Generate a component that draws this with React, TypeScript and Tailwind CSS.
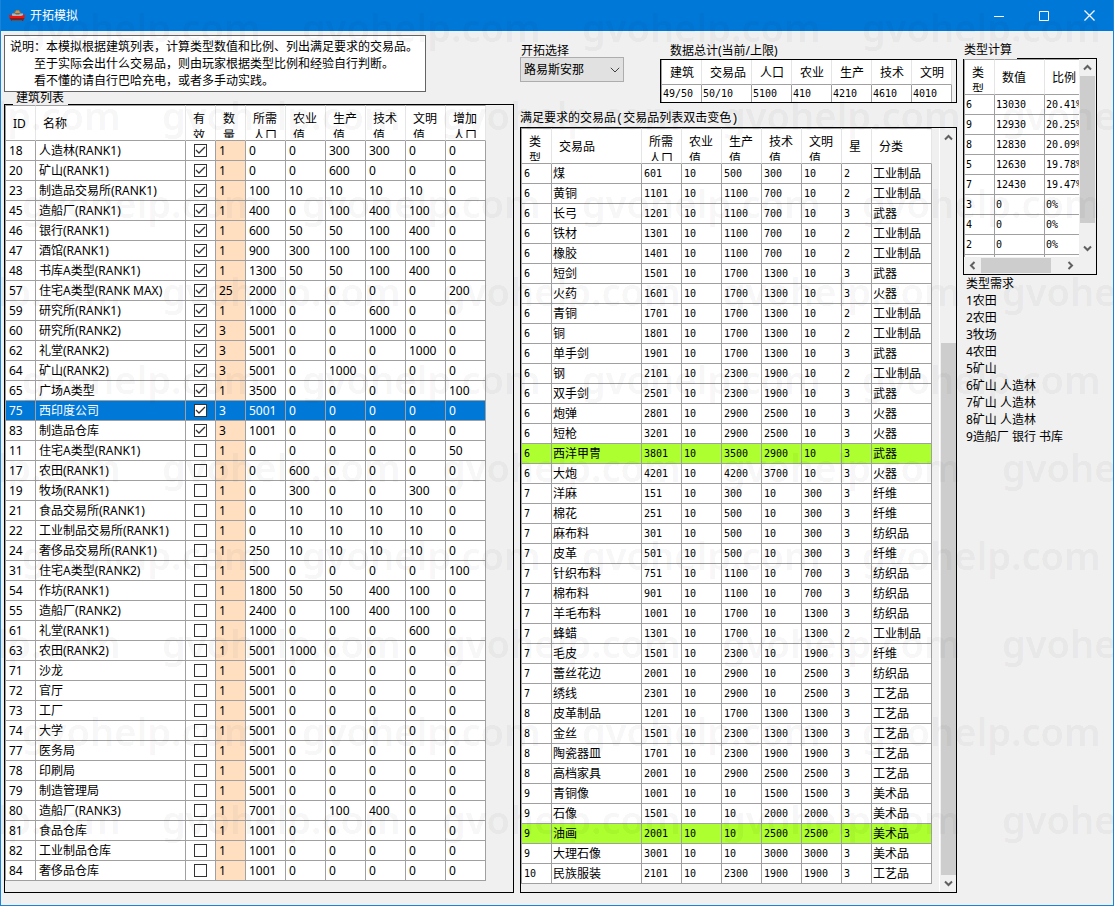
import { ReactNode } from "react";

type Building = [id: number, name: string, on: 0 | 1, count: number, pop: number, agri: number, prod: number, tech: number, civ: number, add: number];
type Goods = [type: number, name: string, pop: number, agri: number, prod: number, tech: number, civ: number, star: number, category: string];

const SELECTED_ID = 75;

const buildings: Building[] = [
  [18, "人造林(RANK1)", 1, 1, 0, 0, 300, 300, 0, 0],
  [20, "矿山(RANK1)", 1, 1, 0, 0, 600, 0, 0, 0],
  [23, "制造品交易所(RANK1)", 1, 1, 100, 10, 10, 10, 10, 0],
  [45, "造船厂(RANK1)", 1, 1, 400, 0, 100, 400, 100, 0],
  [46, "银行(RANK1)", 1, 1, 600, 50, 50, 100, 400, 0],
  [47, "酒馆(RANK1)", 1, 1, 900, 300, 100, 100, 100, 0],
  [48, "书库A类型(RANK1)", 1, 1, 1300, 50, 50, 100, 400, 0],
  [57, "住宅A类型(RANK MAX)", 1, 25, 2000, 0, 0, 0, 0, 200],
  [59, "研究所(RANK1)", 1, 1, 1000, 0, 0, 600, 0, 0],
  [60, "研究所(RANK2)", 1, 3, 5001, 0, 0, 1000, 0, 0],
  [62, "礼堂(RANK2)", 1, 3, 5001, 0, 0, 0, 1000, 0],
  [64, "矿山(RANK2)", 1, 3, 5001, 0, 1000, 0, 0, 0],
  [65, "广场A类型", 1, 1, 3500, 0, 0, 0, 0, 100],
  [75, "西印度公司", 1, 3, 5001, 0, 0, 0, 0, 0],
  [83, "制造品仓库", 1, 3, 1001, 0, 0, 0, 0, 0],
  [11, "住宅A类型(RANK1)", 0, 1, 0, 0, 0, 0, 0, 50],
  [17, "农田(RANK1)", 0, 1, 0, 600, 0, 0, 0, 0],
  [19, "牧场(RANK1)", 0, 1, 0, 300, 0, 0, 300, 0],
  [21, "食品交易所(RANK1)", 0, 1, 0, 10, 10, 10, 10, 0],
  [22, "工业制品交易所(RANK1)", 0, 1, 0, 10, 10, 10, 10, 0],
  [24, "奢侈品交易所(RANK1)", 0, 1, 250, 10, 10, 10, 10, 0],
  [31, "住宅A类型(RANK2)", 0, 1, 500, 0, 0, 0, 0, 100],
  [54, "作坊(RANK1)", 0, 1, 1800, 50, 50, 400, 100, 0],
  [55, "造船厂(RANK2)", 0, 1, 2400, 0, 100, 400, 100, 0],
  [61, "礼堂(RANK1)", 0, 1, 1000, 0, 0, 0, 600, 0],
  [63, "农田(RANK2)", 0, 1, 5001, 1000, 0, 0, 0, 0],
  [71, "沙龙", 0, 1, 5001, 0, 0, 0, 0, 0],
  [72, "官厅", 0, 1, 5001, 0, 0, 0, 0, 0],
  [73, "工厂", 0, 1, 5001, 0, 0, 0, 0, 0],
  [74, "大学", 0, 1, 5001, 0, 0, 0, 0, 0],
  [77, "医务局", 0, 1, 5001, 0, 0, 0, 0, 0],
  [78, "印刷局", 0, 1, 5001, 0, 0, 0, 0, 0],
  [79, "制造管理局", 0, 1, 5001, 0, 0, 0, 0, 0],
  [80, "造船厂(RANK3)", 0, 1, 7001, 0, 100, 400, 0, 0],
  [81, "食品仓库", 0, 1, 1001, 0, 0, 0, 0, 0],
  [82, "工业制品仓库", 0, 1, 1001, 0, 0, 0, 0, 0],
  [84, "奢侈品仓库", 0, 1, 1001, 0, 0, 0, 0, 0],
];

const goods: Goods[] = [
  [6, "煤", 601, 10, 500, 300, 10, 2, "工业制品"],
  [6, "黄铜", 1101, 10, 1100, 700, 10, 2, "工业制品"],
  [6, "长弓", 1201, 10, 1100, 700, 10, 3, "武器"],
  [6, "铁材", 1301, 10, 1100, 700, 10, 2, "工业制品"],
  [6, "橡胶", 1401, 10, 1100, 700, 10, 2, "工业制品"],
  [6, "短剑", 1501, 10, 1700, 1300, 10, 3, "武器"],
  [6, "火药", 1601, 10, 1700, 1300, 10, 3, "火器"],
  [6, "青铜", 1701, 10, 1700, 1300, 10, 2, "工业制品"],
  [6, "铜", 1801, 10, 1700, 1300, 10, 2, "工业制品"],
  [6, "单手剑", 1901, 10, 1700, 1300, 10, 3, "武器"],
  [6, "钢", 2101, 10, 2300, 1900, 10, 2, "工业制品"],
  [6, "双手剑", 2501, 10, 2300, 1900, 10, 3, "武器"],
  [6, "炮弹", 2801, 10, 2900, 2500, 10, 3, "火器"],
  [6, "短枪", 3201, 10, 2900, 2500, 10, 3, "火器"],
  [6, "西洋甲冑", 3801, 10, 3500, 2900, 10, 3, "武器"],
  [6, "大炮", 4201, 10, 4200, 3700, 10, 3, "火器"],
  [7, "洋麻", 151, 10, 300, 10, 300, 3, "纤维"],
  [7, "棉花", 251, 10, 500, 10, 300, 3, "纤维"],
  [7, "麻布料", 301, 10, 500, 10, 300, 3, "纺织品"],
  [7, "皮革", 501, 10, 500, 10, 300, 3, "纤维"],
  [7, "针织布料", 751, 10, 1100, 10, 700, 3, "纺织品"],
  [7, "棉布料", 901, 10, 1100, 10, 700, 3, "纺织品"],
  [7, "羊毛布料", 1001, 10, 1700, 10, 1300, 3, "纺织品"],
  [7, "蜂蜡", 1301, 10, 1700, 10, 1300, 2, "工业制品"],
  [7, "毛皮", 1501, 10, 2300, 10, 1900, 3, "纤维"],
  [7, "蕾丝花边", 2001, 10, 2900, 10, 2500, 3, "纺织品"],
  [7, "绣线", 2301, 10, 2900, 10, 2500, 3, "工艺品"],
  [8, "皮革制品", 1201, 10, 1700, 1300, 1300, 3, "工艺品"],
  [8, "金丝", 1501, 10, 2300, 1300, 1300, 3, "工艺品"],
  [8, "陶瓷器皿", 1701, 10, 2300, 1900, 1900, 3, "工艺品"],
  [8, "高档家具", 2001, 10, 2900, 2500, 2500, 3, "工艺品"],
  [9, "青铜像", 1001, 10, 10, 1500, 1500, 3, "美术品"],
  [9, "石像", 1501, 10, 10, 2000, 2000, 3, "美术品"],
  [9, "油画", 2001, 10, 10, 2500, 2500, 3, "美术品"],
  [9, "大理石像", 3001, 10, 10, 3000, 3000, 3, "美术品"],
  [10, "民族服装", 2101, 10, 2300, 1900, 1900, 3, "工艺品"],
];

const marked = ["西洋甲冑", "油画"];

const totals = [
  ["建筑", "49/50"],
  ["交易品", "50/10"],
  ["人口", "5100"],
  ["农业", "410"],
  ["生产", "4210"],
  ["技术", "4610"],
  ["文明", "4010"],
];

const types = [
  ["6", "13030", "20.41%"],
  ["9", "12930", "20.25%"],
  ["8", "12830", "20.09%"],
  ["5", "12630", "19.78%"],
  ["7", "12430", "19.47%"],
  ["3", "0", "0%"],
  ["4", "0", "0%"],
  ["2", "0", "0%"],
  ["1", "0", "0%"],
];

const needs = ["1农田", "2农田", "3牧场", "4农田", "5矿山", "6矿山 人造林", "7矿山 人造林", "8矿山 人造林", "9造船厂 银行 书库"];

const MONO = "font-['DejaVu_Sans_Mono','Noto_Sans_CJK_SC',monospace] text-[10px]";
const CELL = "h-5 border-r border-b border-[#a0a0a0] p-0 whitespace-nowrap overflow-hidden first:border-l";

function Cols({ widths }: { widths: number[] }) {
  return (
    <colgroup>
      {widths.map((w, i) => (
        <col key={i} style={{ width: w }} />
      ))}
    </colgroup>
  );
}

// Header cell; long captions wrap and are cut off at the second line
function Head({ children, wrap = false }: { children: ReactNode; wrap?: boolean }) {
  return (
    <th
      scope="col"
      className="h-9 border-t border-r border-b border-t-[#a0a0a0] border-r-[#e5e5e5] border-b-[#a0a0a0] bg-white p-0 text-left align-top font-normal first:border-l first:border-l-[#a0a0a0]"
    >
      {wrap ? (
        <div className="h-8 overflow-hidden px-[7px] pt-1">{children}</div>
      ) : (
        <div className="overflow-hidden px-[7px] pt-[9px] whitespace-nowrap">{children}</div>
      )}
    </th>
  );
}

function Arrow({ className = "" }: { className?: string }) {
  return (
    <svg viewBox="0 0 9 9" className={`size-[9px] shrink-0 ${className}`} fill="none" stroke="#606060" strokeWidth="2">
      <path d="M1 6.5 4.5 3 8 6.5" />
    </svg>
  );
}

function CheckBox({ label, checked }: { label: string; checked: boolean }) {
  return (
    <label className="mx-auto grid size-[13px] place-items-center">
      <input
        type="checkbox"
        aria-label={label}
        defaultChecked={checked}
        className="peer col-start-1 row-start-1 size-[13px] appearance-none border border-[#333] bg-white"
      />
      <svg
        viewBox="0 0 13 13"
        className="pointer-events-none invisible col-start-1 row-start-1 size-[13px] peer-checked:visible"
        fill="none"
        stroke="#333"
        strokeWidth="1.3"
      >
        <path d="M2 6 5 9 11 3" />
      </svg>
    </label>
  );
}

function TitleBar() {
  return (
    <header className="flex h-[31px] items-center bg-[#0078d7] pl-2 text-white">
      <svg viewBox="0 0 16 16" className="size-4">
        <path d="M5 3.5 7 2h3l2 2 1 3H4z" fill="#6e6a60" />
        <path d="M7 2.5h3l1 2.5H6z" fill="#c99a55" />
        <path d="M3 5.5h3l1 1h3l1-1h3v2.5H3z" fill="#a9b8bf" />
        <path d="M0 6.5 4 8h8l4-1.5-.5 4h-15z" fill="#f0140c" />
        <path d="M.5 10h15l-1.5 3H2.5z" fill="#7d2326" />
        <path d="M3 12h10v1H3z" fill="#55585e" />
      </svg>
      <h1 className="ml-[5px] flex-1">开拓模拟</h1>
      <button type="button" aria-label="最小化" className="grid h-full w-[45px] place-items-center">
        <svg viewBox="0 0 10 10" className="size-[10px]" stroke="white">
          <path d="M0 5.5h10" />
        </svg>
      </button>
      <button type="button" aria-label="最大化" className="grid h-full w-[45px] place-items-center">
        <svg viewBox="0 0 10 10" className="size-[10px]" stroke="white" fill="none">
          <path d="M.5 .5h9v9h-9z" />
        </svg>
      </button>
      <button type="button" aria-label="关闭" className="grid h-full w-[47px] place-items-center">
        <svg viewBox="0 0 11 11" className="size-[11px]" stroke="white" strokeWidth="1.2">
          <path d="M.5 .5l10 10M10.5 .5l-10 10" />
        </svg>
      </button>
    </header>
  );
}

function BuildingTable() {
  return (
    <table className="w-[481px] table-fixed border-separate border-spacing-0 bg-white">
      <Cols widths={[31, 150, 30, 30, 40, 40, 40, 40, 40, 40]} />
      <thead>
        <tr>
          <Head>ID</Head>
          <Head>名称</Head>
          {["有效", "数量", "所需人口", "农业值", "生产值", "技术值", "文明值", "增加人口"].map((h) => (
            <Head key={h} wrap>{h}</Head>
          ))}
        </tr>
      </thead>
      <tbody>
        {buildings.map(([id, name, on, count, ...values]) => {
          const selected = id === SELECTED_ID;
          return (
            <tr key={id} className={selected ? "bg-[#0078d7] text-white" : ""}>
              <td className={`${CELL} pl-[3px]`}>{id}</td>
              <td className={`${CELL} pl-[3px]`}>{name}</td>
              <td className={CELL}>
                <CheckBox label={name} checked={on === 1} />
              </td>
              <td className={`${CELL} pl-[3px] ${selected ? "" : "bg-[#ffdfc0]"}`}>{count}</td>
              {values.map((v, i) => (
                <td key={i} className={`${CELL} pl-[3px]`}>{v}</td>
              ))}
            </tr>
          );
        })}
      </tbody>
    </table>
  );
}

function GoodsTable() {
  return (
    <table className="w-[411px] table-fixed border-separate border-spacing-0 self-start bg-white">
      <Cols widths={[31, 90, 40, 40, 40, 40, 40, 30, 60]} />
      <thead>
        <tr>
          <Head wrap>类型</Head>
          <Head>交易品</Head>
          {["所需人口", "农业值", "生产值", "技术值", "文明值"].map((h) => (
            <Head key={h} wrap>{h}</Head>
          ))}
          <Head>星</Head>
          <Head>分类</Head>
        </tr>
      </thead>
      <tbody>
        {goods.map((row) => (
          <tr key={row[1]} className={marked.includes(row[1]) ? "bg-[#adff2f]" : ""}>
            {row.map((v, i) => (
              <td key={i} className={`${CELL} ${typeof v === "number" ? `pl-[2px] ${MONO}` : "pl-px"}`}>{v}</td>
            ))}
          </tr>
        ))}
      </tbody>
    </table>
  );
}

function TotalsTable() {
  return (
    <table className="w-[291px] table-fixed border-separate border-spacing-0 bg-white">
      <Cols widths={[41, 50, 40, 40, 40, 40, 40]} />
      <thead>
        <tr>
          {totals.map(([h]) => (
            <th key={h} scope="col" className="h-[25px] border-r border-b border-r-[#e5e5e5] border-b-[#a0a0a0] p-0 pl-2 text-left font-normal whitespace-nowrap first:border-l first:border-l-[#a0a0a0]">
              {h}
            </th>
          ))}
        </tr>
      </thead>
      <tbody>
        <tr>
          {totals.map(([h, v]) => (
            <td key={h} className={`h-[17px] border-r border-[#a0a0a0] p-0 pl-px first:border-l ${MONO}`}>{v}</td>
          ))}
        </tr>
      </tbody>
    </table>
  );
}

function TypePanel() {
  return (
    <div className="border border-black">
      <div className="flex h-[198px]">
        <div className="min-w-0 flex-1 overflow-hidden bg-white">
          <table className="w-[131px] table-fixed border-separate border-spacing-0 bg-white">
            <Cols widths={[31, 50, 50]} />
            <thead>
              <tr>
                <Head wrap>类型</Head>
                <Head>数值</Head>
                <Head>比例</Head>
              </tr>
            </thead>
            <tbody>
              {types.map((row) => (
                <tr key={row[0]}>
                  {row.map((v, i) => (
                    <td key={i} className={`${CELL} pl-px ${MONO}`}>{v}</td>
                  ))}
                </tr>
              ))}
            </tbody>
          </table>
        </div>
        <div className="flex w-[17px] flex-col items-center bg-[#f0f0f0]">
          <Arrow className="my-1" />
          <div className="h-[147px] w-[15px] bg-[#cdcdcd]" />
          <Arrow className="mt-auto mb-1 rotate-180" />
        </div>
      </div>
      <div className="flex h-[17px] items-center bg-[#f0f0f0] pr-[21px] pl-1">
        <Arrow className="-rotate-90" />
        <div className="ml-1 h-[15px] w-[70px] bg-[#cdcdcd]" />
        <Arrow className="ml-auto rotate-90" />
      </div>
    </div>
  );
}

function Watermark() {
  return (
    <div
      aria-hidden="true"
      className="pointer-events-none absolute inset-x-0 top-0 bottom-3 overflow-hidden pt-[3px] font-['Noto_Sans',sans-serif] text-[38px] leading-[48px] font-semibold text-black/5 select-none"
    >
      {Array.from({ length: 11 }, (_, r) => (
        <div key={r} className={`flex h-[88px] ${r % 2 ? "-ml-[119px]" : "ml-[21px]"}`}>
          {Array.from({ length: r % 2 ? 5 : 4 }, (_, c) => (
            <span key={c} className="w-[280px] shrink-0">gvohelp.com</span>
          ))}
        </div>
      ))}
    </div>
  );
}

export default function App() {
  return (
    <div className="relative overflow-hidden border-x border-b border-[#1883d7] bg-[#f0f0f0] font-['Noto_Sans','Noto_Sans_CJK_SC',sans-serif] text-[12px] leading-[17px] text-black">
      <TitleBar />
      <main className="grid grid-cols-[510fr_437fr_134fr] gap-x-[6px] pt-1 pr-4 pb-3 pl-[3px]">
        {/* Buildings */}
        <section className="flex min-w-0 flex-col">
          <p className="w-[422px] border border-[#646464] bg-white px-[5px] py-[2px] whitespace-pre">
            {"说明：本模拟根据建筑列表，计算类型数值和比例、列出满足要求的交易品。\n"}
            <span className="ml-6 block">至于实际会出什么交易品，则由玩家根据类型比例和经验自行判断。</span>
            <span className="ml-6 block">看不懂的请自行巴哈充电，或者多手动实践。</span>
          </p>
          <h2 className="z-10 -mb-px ml-[9px] h-[13px] w-[55px] bg-[#f0f0f0] pl-[3px] leading-[12px]">建筑列表</h2>
          <div className="flex-1 border border-black pb-[11px]">
            <BuildingTable />
          </div>
        </section>

        {/* Goods */}
        <section className="flex min-w-0 flex-col">
          <div className="flex h-[68px] justify-between pt-[7px]">
            <div>
              <label htmlFor="area" className="block h-[15px] pl-px">开拓选择</label>
              <div className="grid w-[104px] items-center">
                <select id="area" className="col-start-1 row-start-1 h-[25px] w-full appearance-none border border-[#adadad] bg-[#e1e1e1] pl-[3px]">
                  <option>路易斯安那</option>
                </select>
                <svg viewBox="0 0 10 6" className="pointer-events-none col-start-1 row-start-1 mr-1 h-[6px] w-[10px] justify-self-end" fill="none" stroke="#404040">
                  <path d="M.8 .8 5 5 9.2 .8" />
                </svg>
              </div>
            </div>
            <div>
              <h2 className="h-[17px] pl-[10px]">数据总计(当前/上限)</h2>
              <div className="w-[297px] border border-black pr-1">
                <TotalsTable />
              </div>
            </div>
          </div>
          <h2 className="mt-2 h-4 font-['Liberation_Mono','Noto_Sans_CJK_SC',monospace]">满足要求的交易品(交易品列表双击变色)</h2>
          <div className="flex flex-1 justify-between border border-black">
            <GoodsTable />
            <div className="flex w-[17px] flex-col items-center border-l border-white bg-[#f0f0f0]">
              <Arrow className="mt-[5px]" />
              <div className="mt-auto h-[532px] w-[15px] bg-[#cdcdcd]" />
              <Arrow className="my-1 rotate-180" />
            </div>
          </div>
        </section>

        {/* Type figures */}
        <section className="min-w-0">
          <h2 className="relative z-10 -mb-px mt-[6px] h-[18px] w-[54px] bg-[#f0f0f0] pl-px">类型计算</h2>
          <TypePanel />
          <h2 className="pl-[3px]">类型需求</h2>
          <ul className="pl-[3px] whitespace-nowrap">
            {needs.map((n) => (
              <li key={n}>{n}</li>
            ))}
          </ul>
        </section>
      </main>
      <Watermark />
    </div>
  );
}
